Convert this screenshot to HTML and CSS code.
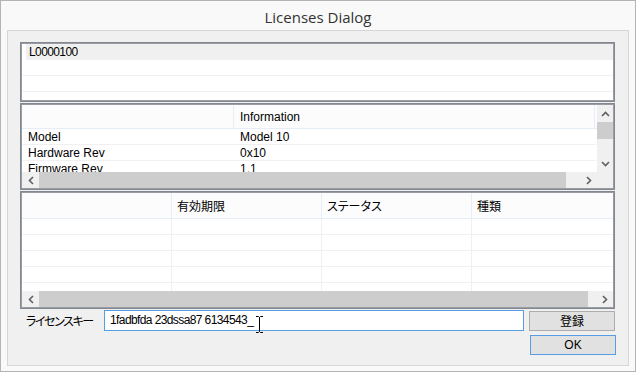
FILE: index.html
```html
<!DOCTYPE html>
<html lang="ja">
<head>
<meta charset="utf-8">
<title>Licenses Dialog</title>
<link rel="stylesheet" href="styles.css">
</head>
<body>
<div class="window">
  <div class="title">Licenses Dialog</div>
  <div class="panel">
    <div class="box box1">
      <div class="lrow sel"><span class="ltext">L0000100</span></div>
      <div class="lrow"></div>
      <div class="lrow"></div>
      <div class="lrow"></div>
    </div>

    <div class="box box2">
      <div class="b2main">
        <div class="b2view">
          <div class="phead">
            <div class="pc1"></div>
            <div class="pc2">Information</div>
          </div>
          <div class="prow"><div class="pc1">Model</div><div class="pc2">Model 10</div></div>
          <div class="prow"><div class="pc1">Hardware Rev</div><div class="pc2">0x10</div></div>
          <div class="prow"><div class="pc1">Firmware Rev</div><div class="pc2">1.1</div></div>
        </div>
        <div class="vscroll">
          <div class="vbtn"><svg width="9" height="6" viewBox="0 0 9 6"><polyline points="1,5 4.5,1.5 8,5" fill="none" stroke="#606060" stroke-width="1.6"/></svg></div>
          <div class="vthumb"></div>
          <div class="vtrack"></div>
          <div class="vbtn"><svg width="9" height="6" viewBox="0 0 9 6"><polyline points="1,1 4.5,4.5 8,1" fill="none" stroke="#606060" stroke-width="1.6"/></svg></div>
        </div>
      </div>
      <div class="hscroll">
        <div class="hbtn"><svg width="6" height="9" viewBox="0 0 6 9"><polyline points="5,1 1.5,4.5 5,8" fill="none" stroke="#606060" stroke-width="1.6"/></svg></div>
        <div class="hthumb thumb2"></div>
        <div class="htrack"></div>
        <div class="hbtn"><svg width="6" height="9" viewBox="0 0 6 9"><polyline points="1,1 4.5,4.5 1,8" fill="none" stroke="#606060" stroke-width="1.6"/></svg></div>
        <div class="corner"></div>
      </div>
    </div>

    <div class="box box3">
      <div class="b3view">
        <div class="ghead">
          <div class="gc"></div>
          <div class="gc">有効期限</div>
          <div class="gc">ステータス</div>
          <div class="gc last">種類</div>
        </div>
        <div class="grow"><div class="gc"></div><div class="gc"></div><div class="gc"></div><div class="gc last"></div></div>
        <div class="grow"><div class="gc"></div><div class="gc"></div><div class="gc"></div><div class="gc last"></div></div>
        <div class="grow"><div class="gc"></div><div class="gc"></div><div class="gc"></div><div class="gc last"></div></div>
        <div class="grow"><div class="gc"></div><div class="gc"></div><div class="gc"></div><div class="gc last"></div></div>
        <div class="grow"><div class="gc"></div><div class="gc"></div><div class="gc"></div><div class="gc last"></div></div>
      </div>
      <div class="hscroll">
        <div class="hbtn"><svg width="6" height="9" viewBox="0 0 6 9"><polyline points="5,1 1.5,4.5 5,8" fill="none" stroke="#606060" stroke-width="1.6"/></svg></div>
        <div class="hthumb thumb3"></div>
        <div class="htrack"></div>
        <div class="hbtn"><svg width="6" height="9" viewBox="0 0 6 9"><polyline points="1,1 4.5,4.5 1,8" fill="none" stroke="#606060" stroke-width="1.6"/></svg></div>
      </div>
    </div>

    <div class="keyrow">
      <div class="keylabel">ライセンスキー</div>
      <div class="keyinput">1fadbfda 23dssa87 6134543_</div>
      <div class="btn">登録</div>
      <svg class="ibeam" width="9" height="19" viewBox="0 0 9 19"><path d="M1 1.5h2.5l1 1 1-1H8M4.5 2.5v14M1 17.5h2.5l1-1 1 1H8" fill="none" stroke="#000" stroke-width="1"/></svg>
    </div>
    <div class="okrow">
      <div class="btn ok">OK</div>
    </div>
  </div>
</div>
</body>
</html>
```

FILE: styles.css
```css
* { box-sizing: border-box; }
html, body { margin: 0; padding: 0; }
body {
  background: #f9f9f9;
  font-family: "Liberation Sans", "Noto Sans CJK JP", sans-serif;
  font-size: 12px;
  color: #000;
}
.window {
  width: 636px;
  height: 372px;
  border: 1px solid #b4b4b4;
  background: #f9f9f9;
  display: flex;
  flex-direction: column;
}
.title {
  height: 29px;
  display: flex;
  align-items: center;
  justify-content: center;
  font-family: "Open Sans", "Noto Sans", sans-serif;
  font-size: 15px;
  color: #333;
  padding-top: 3px;
}
.panel {
  margin: 0 6px 5px 6px;
  flex: 1;
  background: #f0f0f0;
  border: 1px solid #d6d6d6;
  padding: 11px 12px 0 12px;
  display: flex;
  flex-direction: column;
}
.box {
  width: 595px;
  border: 1px solid #828790;
  box-shadow: inset 0 0 0 1px #9a9ca3;
  padding: 1px;
  background: #fff;
  display: flex;
  flex-direction: column;
}
.box1 { height: 60px; overflow: hidden; }
.box2 { height: 87px; margin-top: 1px; }
.box3 { height: 118px; margin-top: 1px; }

/* box1 list */
.lrow {
  height: 16px;
  flex: none;
  border-bottom: 1px solid #f0f0f0;
  display: flex;
  align-items: center;
}
.lrow.sel {
  background: #fff;
  border-bottom: none;
  padding-left: 4px;
}
.ltext {
  background: #f0f0f0;
  flex: 1;
  height: 16px;
  line-height: 16px;
  padding-left: 3px;
  letter-spacing: -0.6px;
}

/* box2 property list */
.b2main {
  flex: 1;
  display: flex;
  overflow: hidden;
}
.b2view {
  flex: 1;
  overflow: hidden;
  background: #fff;
}
.phead {
  height: 24px;
  display: flex;
  background: #fcfcfc;
  border-bottom: 1px solid #e5edf8;
}
.phead .pc1 { border-right: 1px solid #e5edf8; }
.phead .pc2 { border-right: 1px solid #e5edf8; margin-right: 2px; }
.pc1 {
  width: 212px;
  padding-left: 6px;
  display: flex;
  align-items: center;
  white-space: nowrap;
}
.pc2 {
  flex: 1;
  padding-left: 6px;
  display: flex;
  align-items: center;
  white-space: nowrap;
}
.prow {
  height: 16px;
  display: flex;
  border-bottom: 1px solid #f0f0f0;
  margin-right: 1px;
}
.vscroll {
  width: 16px;
  flex: none;
  background: #f0f0f0;
  display: flex;
  flex-direction: column;
}
.vbtn {
  height: 17px;
  display: flex;
  align-items: center;
  justify-content: center;
  flex: none;
}
.vthumb {
  height: 17px;
  background: #cdcdcd;
  flex: none;
}
.vtrack { flex: 1; }

.hscroll {
  height: 16px;
  flex: none;
  display: flex;
  background: #f0f0f0;
}
.hbtn {
  width: 17px;
  flex: none;
  display: flex;
  align-items: center;
  justify-content: center;
}
.hthumb { background: #cdcdcd; flex: none; }
.thumb2 { width: 527px; }
.thumb3 { width: 549px; }
.htrack { flex: 1; }
.corner { width: 16px; flex: none; background: #f0f0f0; }

/* box3 grid */
.b3view {
  flex: 1;
  overflow: hidden;
}
.ghead {
  height: 26px;
  display: flex;
  background: #fcfcfc;
  border-bottom: 1px solid #e5edf8;
}
.gc {
  width: 150px;
  flex: none;
  padding-left: 5px;
  display: flex;
  align-items: center;
  border-right: 1px solid #edf1f7;
  font-feature-settings: "palt";
  white-space: nowrap;
}
.gc.last { flex: 1; border-right: none; }
.ghead .gc { border-right-color: #e5edf8; }
.grow {
  height: 16px;
  display: flex;
  border-bottom: 1px solid #f0f0f0;
}
.grow .gc { border-right-color: #f0f0f0; }

/* key row */
.keyrow {
  position: relative;
  display: flex;
  align-items: center;
  margin-top: 1px;
  height: 21px;
}
.keylabel {
  width: 84px;
  padding-left: 6px;
  font-feature-settings: "palt";
  letter-spacing: -1.4px;
  white-space: nowrap;
  flex: none;
}
.keyinput {
  width: 420px;
  height: 21px;
  border: 1px solid #569de5;
  background: #fff;
  padding-left: 5px;
  line-height: 19px;
  letter-spacing: -0.6px;
  white-space: nowrap;
  flex: none;
}
.btn {
  width: 86px;
  height: 20px;
  margin-left: 5px;
  border: 1px solid #adadad;
  background: #e1e1e1;
  display: flex;
  align-items: center;
  justify-content: center;
  flex: none;
}
.ibeam {
  position: absolute;
  left: 235px;
  top: 5px;
}
.okrow {
  display: flex;
  justify-content: flex-end;
  margin-top: 4px;
}
.btn.ok {
  border-color: #569de5;
  margin-left: 0;
}
```
